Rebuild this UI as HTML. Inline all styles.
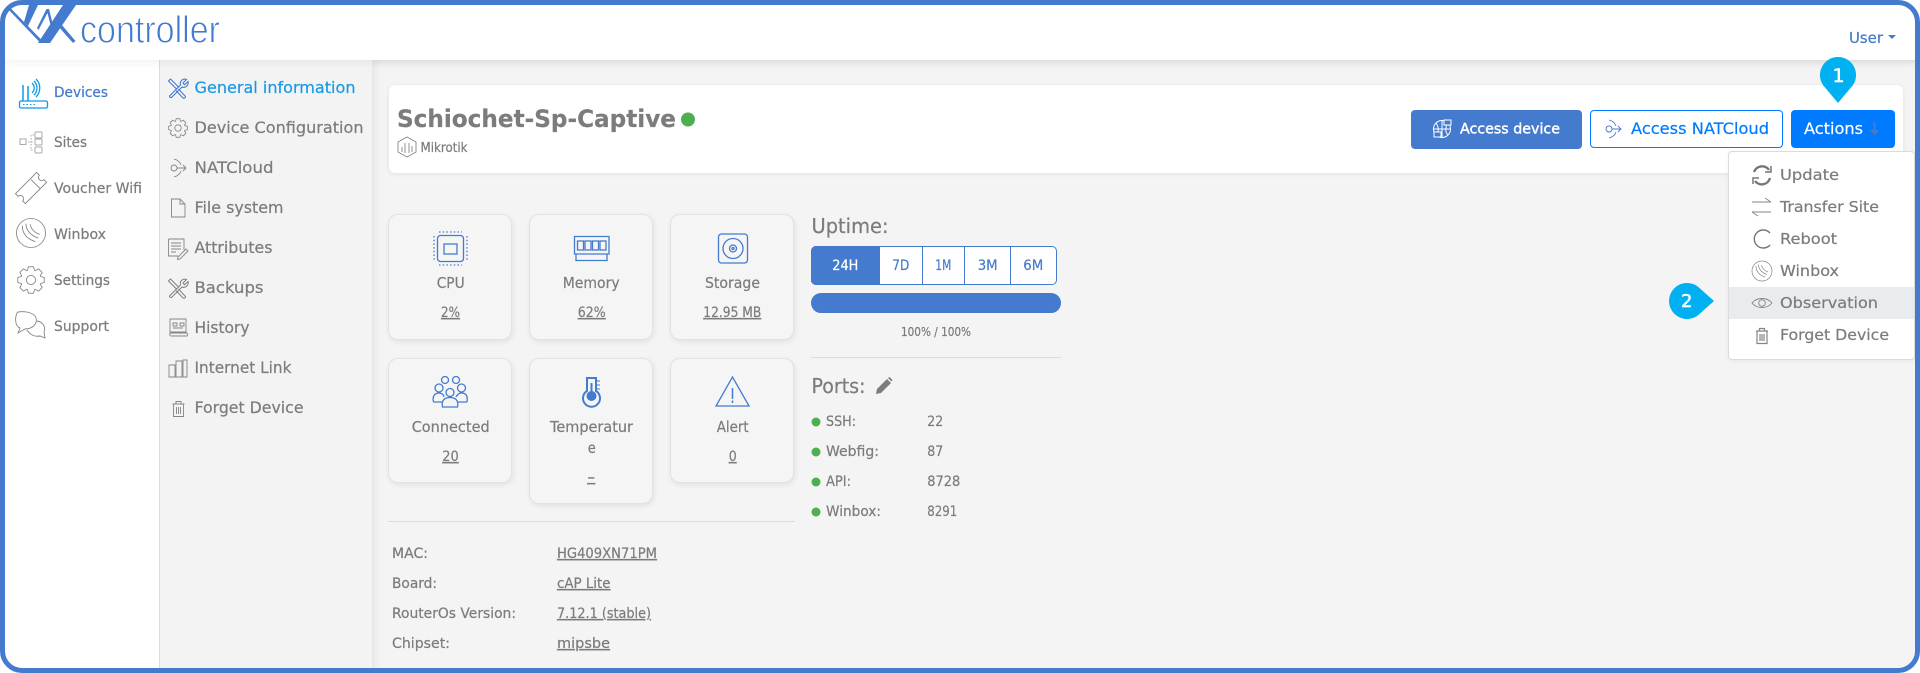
<!DOCTYPE html>
<html lang="en"><head><meta charset="utf-8"><title>NK controller</title>
<style>
html,body{margin:0;padding:0;background:#fff}
body{width:1920px;height:673px;position:relative;overflow:hidden;font-family:"DejaVu Sans","Liberation Sans",sans-serif}
.a{position:absolute;box-sizing:border-box}
.card{background:#f5f5f5;border:1px solid #e2e2e2;border-radius:10px;box-shadow:1px 2px 6px rgba(0,0,0,.08);width:124px}
svg text{font-family:"DejaVu Sans","Liberation Sans",sans-serif;color:#7c7c7c;fill:currentColor;stroke:currentColor;stroke-width:.22}
.u{text-decoration:underline}
.ic{fill:none;stroke:#858585;stroke-width:.9}
.bl{fill:none;stroke:#447bcf;stroke-width:1.3}
</style></head><body>
<div class="a" style="left:0;top:0;width:1920px;height:673px;background:#fff;border-radius:22px"></div>
<!-- sidebar / panels -->
<div class="a" style="left:5px;top:60px;width:154px;height:608px;background:#fff"></div>
<div class="a" style="left:159px;top:60px;width:213px;height:608px;background:#f3f3f3;border-left:1px solid #dcdcdc"></div>
<div class="a" style="left:372px;top:60px;width:1543px;height:608px;background:#f4f4f4;box-shadow:inset 8px 8px 10px -7px rgba(0,0,0,.09)"></div>
<div class="a" style="left:5px;top:5px;width:1910px;height:55px;background:#fff;box-shadow:0 3px 8px rgba(0,0,0,.05)"></div>
<!-- header card -->
<div class="a" style="left:389px;top:85px;width:1514px;height:88px;background:#fff;border-radius:6px;box-shadow:0 1px 5px rgba(0,0,0,.09)"></div>
<!-- cards -->
<div class="a card" style="left:388px;top:214px;height:126px"></div>
<div class="a card" style="left:529px;top:214px;height:126px"></div>
<div class="a card" style="left:670px;top:214px;height:126px"></div>
<div class="a card" style="left:388px;top:358px;height:125px"></div>
<div class="a card" style="left:529px;top:358px;height:146px"></div>
<div class="a card" style="left:670px;top:358px;height:125px"></div>
<div class="a" style="left:388px;top:521px;width:407px;height:1px;background:#dcdcdc"></div>
<!-- uptime -->
<div class="a" style="left:811px;top:246px;width:246px;height:39px;background:#fff;border:1px solid #447bcf;border-radius:5px"></div>
<div class="a" style="left:811px;top:246px;width:69px;height:39px;background:#447bcf;border-radius:5px 0 0 5px"></div>
<div class="a" style="left:922px;top:246px;width:1px;height:39px;background:#447bcf"></div>
<div class="a" style="left:964px;top:246px;width:1px;height:39px;background:#447bcf"></div>
<div class="a" style="left:1010px;top:246px;width:1px;height:39px;background:#447bcf"></div>
<div class="a" style="left:811px;top:293px;width:250px;height:20px;background:#447bcf;border-radius:10px"></div>
<div class="a" style="left:811px;top:357px;width:250px;height:1px;background:#dcdcdc"></div>
<!-- buttons -->
<div class="a" style="left:1411px;top:110px;width:171px;height:39px;background:#447bcf;border-radius:4px"></div>
<div class="a" style="left:1590px;top:110px;width:193px;height:38px;background:#fff;border:1px solid #007bff;border-radius:4px"></div>
<div class="a" style="left:1791px;top:110px;width:104px;height:38px;background:#007bff;border-radius:4px"></div>
<!-- dropdown -->
<div class="a" style="left:1728px;top:151px;width:187px;height:209px;background:#fff;border:1px solid #dcdcdc;border-radius:4px;box-shadow:0 1px 4px rgba(0,0,0,.06)"></div>
<div class="a" style="left:1729px;top:287px;width:185px;height:32px;background:#e9ecef"></div>

<svg class="a" style="left:0;top:0" width="1920" height="673" viewBox="0 0 1920 673" xmlns="http://www.w3.org/2000/svg">
<defs>
<path id="gear" d="M7.14-2.6L9.8-1.9V1.9L7.14 2.6L6.89 3.21L8.27 5.59L5.59 8.27L3.21 6.89L2.6 7.14L1.9 9.8H-1.9L-2.6 7.14L-3.21 6.89L-5.59 8.27L-8.27 5.59L-6.89 3.21L-7.14 2.6L-9.8 1.9V-1.9L-7.14-2.6L-6.89-3.21L-8.27-5.59L-5.59-8.27L-3.21-6.89L-2.6-7.14L-1.9-9.8H1.9L2.6-7.14L3.21-6.89L5.59-8.27L8.27-5.59L6.89-3.21Z"/>
<g id="tools"><path d="M1 3L3 1L11 9L9 11ZM11 11L18 18.5A1.6 1.6 0 0 1 15.5 20L8.5 12.5M2 18L13 7C12 3.5 15 0 19 1.5L15.5 5L17 6.8L20.5 3.5C21.5 7 18 10.5 14.5 9L4 19.5A1.5 1.5 0 0 1 2 18Z"/></g>
<g id="nat"><circle cx="6" cy="10" r="3"/><path d="M9 10H18M15 7L18 10L15 13M6 1C10 2 12 4 13 7M13 13C12 16 10 18 6 19"/></g>
<g id="trash"><path d="M2 4H14M5.5 4V1.5H10.5V4M3 4V16.5H13V4M6 7V14M8 7V14M10 7V14"/></g>
<g id="winbox"><circle cx="0" cy="0" r="10"/><path d="M-6-5C-6 0-3 4 3 6M-3.5-6.5C-3.5-2 0 2 5 3.5M-0.5-6C0-3 2-.5 6 1"/></g>
</defs>

<!-- logo -->
<g fill="#447bcf">
<path d="M7 8L9 6.500L42.500 41L40.500 43Z"/>
<path d="M29 5H38L28 26L24 22Z"/>
<path d="M63 5H76L50 43H38Z"/>
<path d="M58 26L61 24L75.500 41L73 43Z"/>
<path d="M46.500 9L49 9L53.500 27L51.500 29ZM46.500 9L48.500 11L38.500 30L37 28Z"/>
</g>
<text x="80" y="42.500" font-size="38" textLength="140" lengthAdjust="spacingAndGlyphs" style="color:#447bcf;font-family:'Liberation Sans',sans-serif;stroke:#fff;stroke-width:.9">controller</text>

<text x="1849" y="43" font-size="15" textLength="34" lengthAdjust="spacingAndGlyphs" style="color:#447bcf">User</text>
<path d="M1888 35H1896L1892 39Z" fill="#447bcf"/>

<!-- left sidebar -->
<g fill="none" stroke="#0f9be8" stroke-width="1.3">
<rect x="19.500" y="101" width="28" height="7" rx="1.500"/><path d="M23 101V85M28 101V86" stroke-width="1.500"/>
<path d="M32 83C35 86 35 90 32 93M34 81C38 85 38 91 34 95M36 79C41 84 41 92 36 97"/>
<path d="M23 104.500H36" stroke-dasharray="1.500 2" stroke-width="1"/>
</g>
<g fill="none" stroke="#a8a8a8" stroke-width="1">
<rect x="20" y="139" width="6" height="5.500"/><rect x="35" y="132" width="7" height="6" rx="1"/><rect x="35" y="139" width="7" height="6" rx="1"/><rect x="35" y="147" width="7" height="6" rx="1"/>
<path d="M28 142H34M34 135H31V150H34" stroke-dasharray="1.500 1.500"/>
</g>
<g class="ic" transform="translate(31,188) rotate(-45)"><path d="M-15-7H15V-3.200A3.200 3.200 0 0 0 15 3.200V7H-15V3.200A3.200 3.200 0 0 0-15-3.200ZM6-6V7"/></g>
<g class="ic" transform="translate(31,233) scale(1.45)" style="stroke-width:.6"><use href="#winbox"/></g>
<g class="ic" transform="translate(31,280) scale(1.35)" style="stroke-width:.65"><use href="#gear"/><circle r="3.400"/></g>
<g class="ic">
<path d="M18 312C24 311 34 312 36 318C38 324 32 329 25 329L18 333L20 328C14 326 15 314 18 312Z"/>
<path d="M37 321C43 322 46 327 44 332L45 338L40 336C35 337 30 335 27 330"/>
</g>
<g font-size="14">
<text x="54" y="97" textLength="54" lengthAdjust="spacingAndGlyphs" style="color:#447bcf">Devices</text>
<text x="54" y="147" textLength="33" lengthAdjust="spacingAndGlyphs">Sites</text>
<text x="54" y="193" textLength="88" lengthAdjust="spacingAndGlyphs">Voucher Wifi</text>
<text x="54" y="239" textLength="52" lengthAdjust="spacingAndGlyphs">Winbox</text>
<text x="54" y="285" textLength="56" lengthAdjust="spacingAndGlyphs">Settings</text>
<text x="54" y="331" textLength="55" lengthAdjust="spacingAndGlyphs">Support</text>
</g>

<!-- sub menu -->
<g font-size="16">
<text x="194.500" y="93" textLength="161" lengthAdjust="spacingAndGlyphs" style="color:#1b9ae4">General information</text>
<text x="194.500" y="133" textLength="169" lengthAdjust="spacingAndGlyphs">Device Configuration</text>
<text x="194.500" y="173" textLength="79" lengthAdjust="spacingAndGlyphs">NATCloud</text>
<text x="194.500" y="213" textLength="89" lengthAdjust="spacingAndGlyphs">File system</text>
<text x="194.500" y="253" textLength="78" lengthAdjust="spacingAndGlyphs">Attributes</text>
<text x="194.500" y="293" textLength="69" lengthAdjust="spacingAndGlyphs">Backups</text>
<text x="194.500" y="333" textLength="55" lengthAdjust="spacingAndGlyphs">History</text>
<text x="194.500" y="373" textLength="97" lengthAdjust="spacingAndGlyphs">Internet Link</text>
<text x="194.500" y="413" textLength="109" lengthAdjust="spacingAndGlyphs">Forget Device</text>
</g>
<g fill="none" stroke="#447bcf" stroke-width="1.100" transform="translate(167.500,78)"><use href="#tools"/></g>
<g class="ic" transform="translate(178,128) scale(.95)"><use href="#gear"/><circle r="3.400"/></g>
<g class="ic" transform="translate(168,158)"><use href="#nat"/></g>
<path class="ic" d="M171.500 199H180L185 204V217H171.500ZM180 199V204H185"/>
<g class="ic"><path d="M168.500 239H184V250M168.500 239V256H178M171 243H181M171 246H181M171 249H181M171 252H176M178 257L186 249L188 251L180 259L177.500 259.500Z"/></g>
<g fill="none" stroke="#7f7f7f" stroke-width="1" transform="translate(167.500,278)"><use href="#tools"/></g>
<g class="ic"><path d="M170 319H186V332H170ZM170 333H187A2 2 0 0 1 187 336H171A2 2 0 0 1 170 333M173 323H177V326H173ZM180 323H184V326H180ZM173 328H183"/></g>
<g class="ic"><path d="M169 365H175V377H169ZM176 361H182V377H176ZM183 360H187V377H183Z"/></g>
<g class="ic" transform="translate(170.500,400)"><use href="#trash"/></g>

<!-- header title -->
<text x="397" y="127" font-size="24" font-weight="700" textLength="279" lengthAdjust="spacingAndGlyphs">Schiochet-Sp-Captive</text>
<circle cx="688" cy="119.500" r="7" fill="#4caf50"/>
<path class="ic" d="M407 137L416 142V152L407 157L398 152V142ZM402 147V152M405 143V153M409 143V153M412 146V152"/>
<text x="420.500" y="152" font-size="13" textLength="47" lengthAdjust="spacingAndGlyphs">Mikrotik</text>

<!-- buttons content -->
<g fill="none" stroke="#fff" stroke-width="1"><circle cx="1442" cy="129" r="8.500"/><path d="M1433.500 129H1450.500M1442 120.500V137.500M1436 123C1439 127 1439 132 1436 135M1448 123C1445 127 1445 132 1448 135"/><rect x="1444" y="120" width="7" height="5" fill="#447bcf"/><rect x="1434" y="132" width="7" height="5" fill="#447bcf"/></g>
<text x="1460" y="133.500" font-size="14" textLength="100" lengthAdjust="spacingAndGlyphs" style="color:#fff;stroke-width:.4">Access device</text>
<g fill="none" stroke="#447bcf" stroke-width=".9" transform="translate(1603,119)"><use href="#nat"/></g>
<text x="1631" y="134" font-size="16" textLength="138" lengthAdjust="spacingAndGlyphs" style="color:#007bff">Access NATCloud</text>
<text x="1804" y="134" font-size="16" textLength="59" lengthAdjust="spacingAndGlyphs" style="color:#fff">Actions</text>
<path d="M1873.500 122H1875.500V130H1879L1874.500 135.500L1870 130H1873.500Z" fill="#447bcf"/>

<!-- cards content -->
<g class="bl"><rect x="437.500" y="235.500" width="26" height="26" rx="3"/><rect x="444" y="244" width="13" height="10"/>
<path d="M434 236V261M467 236V261M439 232H462M439 265H462" stroke-dasharray="1.500 2.200"/></g>
<g class="bl"><path d="M574.500 236.500H609V254H574.500ZM576 254V260.500H607V254"/><rect x="577.500" y="241" width="6" height="9"/><rect x="585" y="241" width="6" height="9"/><rect x="592.500" y="241" width="6" height="9"/><rect x="600" y="241" width="6" height="9"/></g>
<g class="bl"><rect x="718.500" y="234" width="29" height="29" rx="3"/><circle cx="733" cy="248.500" r="10"/><circle cx="733" cy="248.500" r="3.500"/><circle cx="733" cy="248.500" r="1"/></g>
<g class="bl">
<circle cx="445" cy="380" r="3.500"/><circle cx="456" cy="380" r="3.500"/><circle cx="439" cy="388" r="4"/><circle cx="461.500" cy="388" r="4"/><circle cx="450" cy="392.500" r="4"/>
<path d="M433.500 402C432 396 435 393 439 393C442 393 444 395 444 397M467 402C468 396 466 393 461.500 393C459 393 457 395 456 397M433.500 402H442M458 402H467M442.500 407C441 400 445 397.500 450 397.500C455 397.500 459 400 457.500 407Z"/>
</g>
<g><path d="M587 378H596V391A8.500 8.500 0 1 1 587 391Z" fill="none" stroke="#447bcf" stroke-width="2"/><circle cx="591.500" cy="396" r="5" fill="#447bcf"/><path d="M591.500 396V383" stroke="#447bcf" stroke-width="2"/><path d="M597 381H600M597 385H600M597 389H600" stroke="#447bcf" stroke-width="1"/></g>
<g class="bl"><path d="M732.500 377L749 406H716Z"/><path d="M732.500 388V399M732.500 400.500V403" stroke-width="1.500"/></g>

<g font-size="15">
<text x="436.700" y="288" textLength="28" lengthAdjust="spacingAndGlyphs">CPU</text>
<text x="562.700" y="288" textLength="57" lengthAdjust="spacingAndGlyphs">Memory</text>
<text x="705" y="288" textLength="55" lengthAdjust="spacingAndGlyphs">Storage</text>
<text x="411.700" y="432" textLength="78" lengthAdjust="spacingAndGlyphs">Connected</text>
<text x="550" y="432" textLength="83" lengthAdjust="spacingAndGlyphs">Temperatur</text>
<text x="587.700" y="453" textLength="8" lengthAdjust="spacingAndGlyphs">e</text>
<text x="716.700" y="432" textLength="32" lengthAdjust="spacingAndGlyphs">Alert</text>
</g>
<g font-size="14">
<text class="u" x="441" y="317" textLength="19" lengthAdjust="spacingAndGlyphs">2%</text>
<text class="u" x="577.700" y="317" textLength="28" lengthAdjust="spacingAndGlyphs">62%</text>
<text class="u" x="703.300" y="317" textLength="58" lengthAdjust="spacingAndGlyphs">12.95 MB</text>
<text class="u" x="442.300" y="461" textLength="16.500" lengthAdjust="spacingAndGlyphs">20</text>
<text class="u" x="587.300" y="482" textLength="8" lengthAdjust="spacingAndGlyphs">-</text>
<text class="u" x="728.700" y="461" textLength="8" lengthAdjust="spacingAndGlyphs">0</text>
</g>

<!-- info -->
<g font-size="14">
<text x="392" y="558" textLength="36" lengthAdjust="spacingAndGlyphs">MAC:</text>
<text x="392" y="588" textLength="45" lengthAdjust="spacingAndGlyphs">Board:</text>
<text x="392" y="618" textLength="124" lengthAdjust="spacingAndGlyphs">RouterOs Version:</text>
<text x="392" y="648" textLength="58" lengthAdjust="spacingAndGlyphs">Chipset:</text>
<text class="u" x="557" y="558" textLength="100" lengthAdjust="spacingAndGlyphs">HG409XN71PM</text>
<text class="u" x="557" y="588" textLength="53.500" lengthAdjust="spacingAndGlyphs">cAP Lite</text>
<text class="u" x="557" y="618" textLength="94" lengthAdjust="spacingAndGlyphs">7.12.1 (stable)</text>
<text class="u" x="557" y="648" textLength="53" lengthAdjust="spacingAndGlyphs">mipsbe</text>
</g>

<!-- uptime text -->
<text x="811.500" y="233" font-size="20" textLength="77" lengthAdjust="spacingAndGlyphs">Uptime:</text>
<g font-size="14">
<text x="832.300" y="270" textLength="26" lengthAdjust="spacingAndGlyphs" style="color:#fff">24H</text>
<text x="892.300" y="270" textLength="17" lengthAdjust="spacingAndGlyphs" style="color:#447bcf">7D</text>
<text x="935.300" y="270" textLength="16" lengthAdjust="spacingAndGlyphs" style="color:#447bcf">1M</text>
<text x="977.700" y="270" textLength="20" lengthAdjust="spacingAndGlyphs" style="color:#447bcf">3M</text>
<text x="1023.300" y="270" textLength="20" lengthAdjust="spacingAndGlyphs" style="color:#447bcf">6M</text>
</g>
<text x="901" y="336" font-size="12" textLength="70" lengthAdjust="spacingAndGlyphs">100% / 100%</text>
<text x="811.500" y="393" font-size="20" textLength="54" lengthAdjust="spacingAndGlyphs">Ports:</text>
<path d="M876 394L877 389L887 379L891 383L881 393ZM888 378L889.500 377L892.500 380L891.500 381.500Z" fill="#7c7c7c"/>
<g fill="#4caf50"><circle cx="816" cy="422" r="4.500"/><circle cx="816" cy="452" r="4.500"/><circle cx="816" cy="482" r="4.500"/><circle cx="816" cy="512" r="4.500"/></g>
<g font-size="14">
<text x="826" y="426" textLength="30" lengthAdjust="spacingAndGlyphs">SSH:</text>
<text x="826" y="456" textLength="53" lengthAdjust="spacingAndGlyphs">Webfig:</text>
<text x="826" y="486" textLength="25" lengthAdjust="spacingAndGlyphs">API:</text>
<text x="826" y="516" textLength="55" lengthAdjust="spacingAndGlyphs">Winbox:</text>
<text x="927.300" y="426" textLength="16" lengthAdjust="spacingAndGlyphs">22</text>
<text x="927.300" y="456" textLength="16" lengthAdjust="spacingAndGlyphs">87</text>
<text x="927.300" y="486" textLength="33" lengthAdjust="spacingAndGlyphs">8728</text>
<text x="927.300" y="516" textLength="30" lengthAdjust="spacingAndGlyphs">8291</text>
</g>

<!-- dropdown content -->
<g font-size="15">
<text x="1780" y="180" textLength="59" lengthAdjust="spacingAndGlyphs">Update</text>
<text x="1780" y="212" textLength="99" lengthAdjust="spacingAndGlyphs">Transfer Site</text>
<text x="1780" y="244" textLength="57" lengthAdjust="spacingAndGlyphs">Reboot</text>
<text x="1780" y="276" textLength="59" lengthAdjust="spacingAndGlyphs">Winbox</text>
<text x="1780" y="308" textLength="98" lengthAdjust="spacingAndGlyphs">Observation</text>
<text x="1780" y="340" textLength="109" lengthAdjust="spacingAndGlyphs">Forget Device</text>
</g>
<g fill="none" stroke="#777" stroke-width="2.400"><path d="M1754 172A8.500 8.500 0 0 1 1769 170M1770 178A8.500 8.500 0 0 1 1755 181"/><path d="M1771 166V172H1765M1753 184V178H1759" stroke-width="1.500"/></g>
<path class="ic" d="M1752 202H1771M1765 198L1771 202M1752 212H1771M1752 212L1758 216"/>
<path d="M1770 233A9 9 0 1 0 1770 245" fill="none" stroke="#777" stroke-width="1.400"/>
<g class="ic" transform="translate(1762,271)" style="stroke-width:.7"><use href="#winbox"/></g>
<g class="ic"><path d="M1752 303C1757 297 1767 297 1772 303C1767 309 1757 309 1752 303Z"/><circle cx="1762" cy="303" r="3.300"/></g>
<g class="ic" transform="translate(1754,327)" style="stroke-width:1.200"><use href="#trash"/></g>

<!-- badges -->
<path d="M1838 57A18 18 0 0 1 1851 87.500L1838 103L1825 87.500A18 18 0 0 1 1838 57Z" fill="#00b0f0"/>
<text x="1832.500" y="82" font-size="19" style="color:#fff;stroke-width:.5">1</text>
<path d="M1687 283A18 18 0 0 1 1700 288.500L1714 301L1700 313.500A18 18 0 1 1 1687 283Z" fill="#00b0f0"/>
<text x="1681" y="307" font-size="18" style="color:#fff;stroke-width:.5">2</text>
</svg>
<!-- frame -->
<div class="a" style="left:0;top:0;width:1920px;height:673px;border:5px solid #447bcf;border-radius:22px"></div>
</body></html>
